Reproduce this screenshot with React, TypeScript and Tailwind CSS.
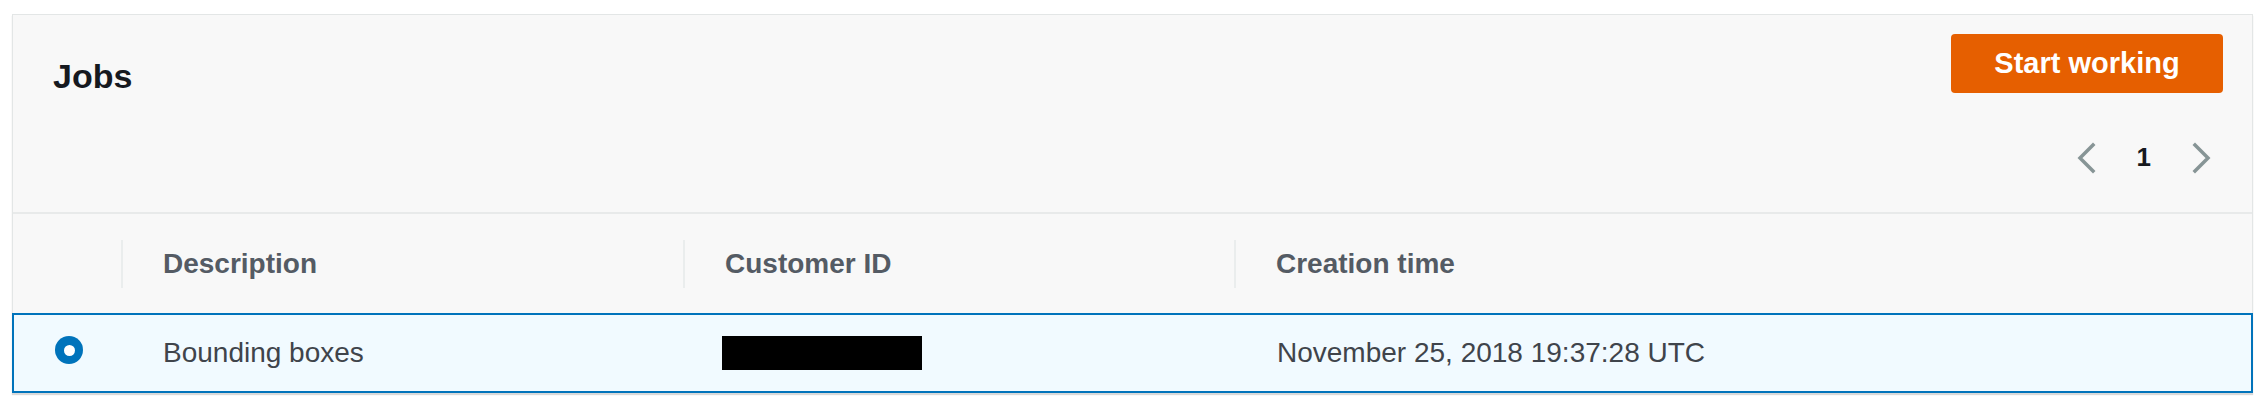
import React from 'react';

function Chevron({ dir }: { dir: 'left' | 'right' }) {
  return (
    <svg width="22" height="32" viewBox="0 0 22 32" fill="none">
      <path
        d={dir === 'left' ? 'M18 3 L5 16 L18 29' : 'M4 3 L17 16 L4 29'}
        stroke="#879596"
        strokeWidth="3.5"
        strokeLinecap="square"
      />
    </svg>
  );
}

const columns = ['Description', 'Customer ID', 'Creation time'];

export default function App() {
  return (
    <div
      className="h-[406px] w-full bg-white pl-[12px] pr-[13px] pt-[14px]"
      style={{ fontFamily: '"Liberation Sans", Arial, sans-serif' }}
    >
      <div className="border border-[#e3e6e6] bg-[#f8f8f8] shadow-[0_2px_1px_rgba(0,0,0,0.15)]">
        <div className="flex h-[199px] justify-between border-b-2 border-[#e8eaea] pl-[40px] pr-[29px]">
          <h2 className="pt-[41px] text-[34px] font-bold leading-[40px] text-[#16191f]">Jobs</h2>
          <div className="flex flex-col items-end pt-[19px]">
            <button className="h-[59px] w-[272px] rounded-[4px] bg-[#e65f00] text-[29px] font-bold text-white">
              Start working
            </button>
            <div className="mt-[45px] mr-[10px] flex items-center">
              <Chevron dir="left" />
              <span className="mx-[40px] text-[26px] font-bold text-[#16191f]">1</span>
              <Chevron dir="right" />
            </div>
          </div>
        </div>
        <div className="grid h-[99px] grid-cols-[108px_562px_551px_1fr] items-center">
          <div />
          {columns.map((c) => (
            <div key={c} className="flex h-[48px] items-center border-l-2 border-[#eaeded] pl-[40px]">
              <span className="text-[28px] font-bold text-[#545b64]">{c}</span>
            </div>
          ))}
        </div>
        <div className="-mx-px -mb-px grid h-[80px] grid-cols-[108px_562px_551px_1fr] items-center border-2 border-[#0073bb] bg-[#f1faff] text-[28px] text-[#3f444b]">
          <div className="flex justify-center pl-[2px] pb-[6px]">
            <span className="flex h-[28px] w-[28px] items-center justify-center rounded-full bg-[#0073bb]">
              <span className="h-[11px] w-[11px] rounded-full bg-white" />
            </span>
          </div>
          <div className="pl-[41px]">Bounding boxes</div>
          <div className="pl-[38px]">
            <div className="h-[34px] w-[200px] bg-black" />
          </div>
          <div className="pl-[42px]">November 25, 2018 19:37:28 UTC</div>
        </div>
      </div>
    </div>
  );
}
